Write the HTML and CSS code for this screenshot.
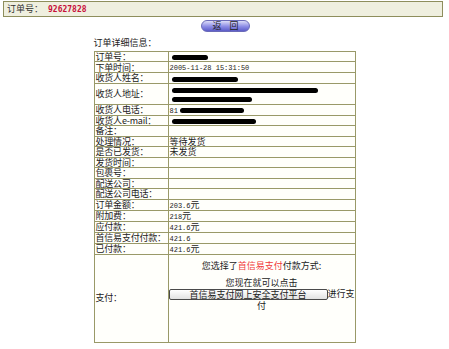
FILE: index.html
```html
<!DOCTYPE html>
<html lang="zh-CN">
<head>
<meta charset="UTF-8" />
<title>订单详细信息</title>
<link rel="stylesheet" href="styles.css">
</head>
<body>
<div class="order-bar">订单号： <span class="order-no">92627828</span></div>
<div class="back-row"><span class="back-btn">返 回</span></div>
<div class="detail">
  <div class="detail-title">订单详细信息：</div>
  <table class="info">
    <tr><td class="label">订单号：</td><td><span class="ink" style="width:36px"></span></td></tr>
    <tr><td class="label">下单时间：</td><td><span class="mono">2005-11-28 15:31:50</span></td></tr>
    <tr><td class="label">收货人姓名：</td><td><span class="ink" style="width:66px"></span></td></tr>
    <tr><td class="label tall">收货人地址：</td><td class="tall"><span class="ink" style="width:146px"></span><br><span class="ink" style="width:80px"></span></td></tr>
    <tr><td class="label">收货人电话：</td><td><span class="mono">81</span><span class="ink" style="width:64px"></span></td></tr>
    <tr><td class="label">收货人e-mail：</td><td><span class="ink" style="width:84px"></span></td></tr>
    <tr><td class="label">备注：</td><td></td></tr>
    <tr><td class="label">处理情况：</td><td>等待发货</td></tr>
    <tr><td class="label">是否已发货：</td><td>未发货</td></tr>
    <tr><td class="label">发货时间：</td><td></td></tr>
    <tr><td class="label">包裹号：</td><td></td></tr>
    <tr><td class="label">配送公司：</td><td></td></tr>
    <tr><td class="label">配送公司电话：</td><td></td></tr>
    <tr><td class="label">订单金额：</td><td><span class="mono">203.6</span>元</td></tr>
    <tr><td class="label">附加费：</td><td><span class="mono">218</span>元</td></tr>
    <tr><td class="label">应付款：</td><td><span class="mono">421.6</span>元</td></tr>
    <tr><td class="label">首信易支付付款：</td><td><span class="mono">421.6</span></td></tr>
    <tr><td class="label">已付款：</td><td><span class="mono">421.6</span>元</td></tr>
    <tr class="pay-row">
      <td class="label">支付：</td>
      <td class="pay">您选择了<span class="red">首信易支付</span>付款方式:<br><br>您现在就可以点击<br><span class="pay-btn">首信易支付网上安全支付平台</span>进行支付</td>
    </tr>
  </table>
</div>
</body>
</html>
```

FILE: styles.css
```css
body {
  margin: 0;
  font-family: "Noto Sans CJK SC", "DejaVu Sans", sans-serif;
  font-size: 9px;
  color: #222;
  background: #fff;
}
.order-bar {
  margin: 1px 6px 0 3px;
  height: 14px;
  line-height: 14px;
  padding-left: 3px;
  border: 1px solid #8e8e5c;
  background: #efefdf;
  color: #333;
}
.order-no {
  color: #c8103a;
  font-weight: bold;
  font-family: "DejaVu Sans Mono", monospace;
  font-size: 8px;
  margin-left: 3px;
}
.back-row {
  text-align: center;
  padding-top: 2px;
  height: 13px;
}
.back-btn {
  display: inline-block;
  width: 47px;
  height: 10px;
  line-height: 10px;
  border-radius: 6px;
  border: 1px solid #6a6ab8;
  background: linear-gradient(#dcdcf8, #8c8ce6 55%, #5c5cc8);
  color: #222;
  font-size: 9px;
  word-spacing: 6px;
  margin-left: 2px;
}
.detail {
  width: 262px;
  margin: 5px auto 0;
}
.detail-title {
  height: 14px;
  line-height: 12px;
}
.info {
  border-collapse: collapse;
  table-layout: fixed;
  width: 262px;
  background: #fffffb;
}
.info td {
  border: 1px solid #999968;
  height: 9.45px;
  line-height: 9.45px;
  padding: 0 0 0 1px;
  white-space: nowrap;
  vertical-align: middle;
  overflow: hidden;
}
.info td.label {
  width: 72px;
  letter-spacing: -0.2px;
}
.info td.tall {
  height: 20px;
}
.mono {
  font-family: "Liberation Mono", monospace;
  font-size: 7px;
  line-height: 1;
}
.ink {
  display: inline-block;
  height: 5px;
  background: #000;
  border-radius: 3px;
  vertical-align: middle;
  margin-left: 2px;
}
.info tr.pay-row td {
  height: 80px;
}
.info td.pay {
  white-space: normal;
  text-align: center;
  vertical-align: top;
  line-height: 8.5px;
  padding: 7px 0 0;
  height: 73px;
}
.red {
  color: #f03a3a;
}
.pay-btn {
  display: inline-block;
  width: 157px;
  height: 9px;
  line-height: 9px;
  border: 1px solid #4a4a4a;
  border-radius: 2px;
  background: linear-gradient(#ffffff, #e2e2e2);
  margin: 2px 0;
  vertical-align: middle;
}
```
